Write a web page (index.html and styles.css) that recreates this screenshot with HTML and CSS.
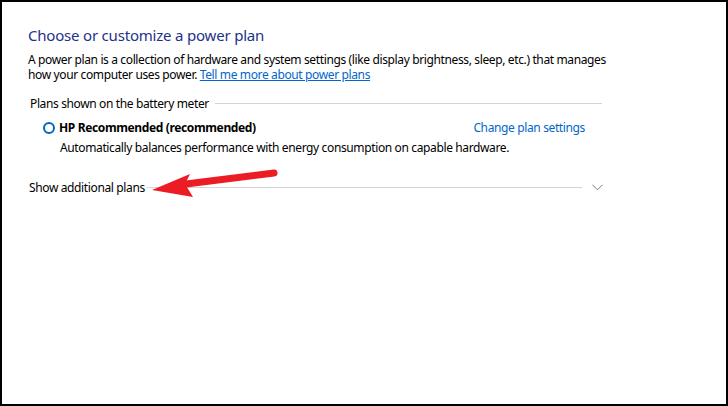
FILE: index.html
```html
<!DOCTYPE html>
<html lang="en">
<head>
    <meta charset="UTF-8">
    <title>Power Options</title>
    <link rel="stylesheet" href="styles.css">
</head>
<body>
    <div class="panel">
        <h1 class="titulo">Choose or customize a power plan</h1>
        <p class="intro">A power plan is a collection of hardware and system settings (like display brightness, sleep, etc.) that manages<br>
        how your computer uses power. <a href="#" class="link">Tell me more about power plans</a></p>

        <div class="grupo">
            <span>Plans shown on the battery meter</span>
            <span class="linha"></span>
        </div>

        <div class="plano">
            <label class="plano-nome"><span class="radio"></span>HP Recommended (recommended)</label>
            <a href="#" class="alterar">Change plan settings</a>
        </div>
        <p class="plano-desc">Automatically balances performance with energy consumption on capable hardware.</p>

        <div class="mais">
            <span>Show additional plans</span>
            <span class="linha"></span>
            <svg class="seta-baixo" width="11" height="7" viewBox="0 0 11 7">
                <path d="M0.5 0.8 L5.5 5.8 L10.5 0.8" fill="none" stroke="#7a7a70" stroke-width="1"/>
            </svg>
        </div>

        <!-- anotação vermelha por cima -->
        <svg class="anotacao" width="140" height="40" viewBox="0 0 140 40">
            <path d="M124 8 L36 19" stroke="#ec1c24" stroke-width="7" stroke-linecap="round"/>
            <polygon points="2,25 40,9 35,19 43,32" fill="#ec1c24"/>
        </svg>
    </div>
</body>
</html>
```

FILE: styles.css
```css
body {
    margin: 0;
    font-family: "Noto Sans", sans-serif;
    font-size: 12px;
    letter-spacing: -0.37px;
    color: #000;
}
.panel {
    position: relative;
    width: 728px;
    height: 406px;
    box-sizing: border-box;
    border: 2px solid #000;
    padding: 23px 0 0 26px;
    background: #fff;
}
.titulo {
    margin: 0;
    font-size: 15px;
    font-weight: normal;
    letter-spacing: -0.2px;
    line-height: 20px;
    color: #1e3287;
}
.intro {
    margin: 7px 0 0;
    line-height: 15px;
}
.link {
    color: #0066cc;
}
.grupo {
    display: flex;
    align-items: center;
    width: 572px;
    margin: 14px 0 0 2px;
    line-height: 15px;
}
.linha {
    flex: 1;
    height: 1px;
    background: #d5d5d5;
    margin-left: 6px;
}
.plano {
    display: flex;
    justify-content: space-between;
    width: 542px;
    margin: 9px 0 0 15px;
    line-height: 15px;
}
.plano-nome {
    display: flex;
    align-items: center;
    font-weight: bold;
}
.radio {
    width: 8px;
    height: 8px;
    border: 2px solid #0067c0;
    border-radius: 50%;
    margin-right: 4px;
}
.alterar {
    color: #0066cc;
    text-decoration: none;
}
.plano-desc {
    margin: 5px 0 0 32px;
    line-height: 15px;
}
.mais {
    display: flex;
    align-items: center;
    width: 574px;
    margin: 25px 0 0 1px;
    line-height: 15px;
}
.mais .linha {
    margin-left: 2px;
    margin-right: 10px;
}
.seta-baixo {
    display: block;
}
.anotacao {
    position: absolute;
    left: 148px;
    top: 163px;
}
```
